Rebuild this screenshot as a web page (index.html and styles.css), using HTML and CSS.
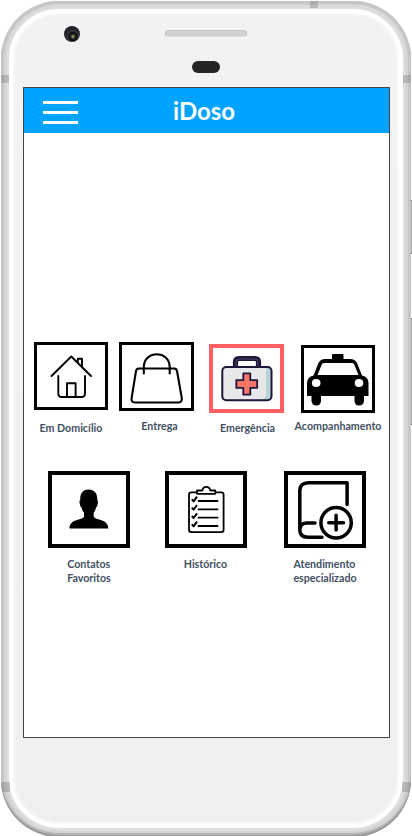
FILE: index.html
```html
<!DOCTYPE html>
<html lang="pt">
<head>
<meta charset="utf-8">
<title>iDoso</title>
<link rel="stylesheet" href="styles.css">
</head>
<body>
<i class="key power"></i><i class="key volume"></i>
<div class="phone">
  <div class="face">
    <i class="speaker"></i><i class="camera"></i><i class="sensor"></i>
    <main class="screen">
      <header class="bar">
        <div class="menu"><i></i><i></i><i></i></div>
        <h1>iDoso</h1>
      </header>
      <section class="row services">
        <div class="item home">
          <svg class="icon" viewBox="0 0 74 68"><g fill="none" stroke="#000" stroke-width="1.9" stroke-linecap="round" stroke-linejoin="round"><path d="M17.5 34 37.3 14.5 57 34M43.8 20.8V16.8H48V25M24.3 34V51.5Q24.3 55 27.8 55H47.5Q51 55 51 51.5V34M33 55V41.2H41.6V55"/></g></svg>
          <span>Em Domicílio</span>
        </div>
        <div class="item bag">
          <svg class="icon" viewBox="0 0 75 69"><g fill="none" stroke="#000" stroke-width="2.1" stroke-linecap="round" stroke-linejoin="round"><path d="M20 26.5H55Q57.6 26.5 58 29L62.7 55.5Q63.4 60.5 59.5 60.5H15.8Q11.8 60.5 12.7 55.5L17 29Q17.4 26.5 20 26.5ZM24.8 31.5V25C24.8 8 50.7 8 50.7 25V31.5"/></g></svg>
          <span>Entrega</span>
        </div>
        <div class="item emergency">
          <svg class="icon" viewBox="0 0 75 69"><path d="M26.5 23V18Q26.5 14.5 30 14.5H46Q49.5 14.5 49.5 18V23" fill="none" stroke="#20153a" stroke-width="5.2"/><path d="M27 22V18Q27 15 30 15H46Q49 15 49 18V22" fill="none" stroke="#51466b" stroke-width="1"/><rect x="13.3" y="23" width="49.2" height="33.3" rx="4" fill="#e8e8ea"/><path d="M57 24H59Q62 24 62 27V52Q62 56 58 56H53Q57 54 57 50Z" fill="#b9d2d5"/><rect x="13.3" y="23" width="49.2" height="33.3" rx="4" fill="none" stroke="#20153a" stroke-width="2"/><path d="M34.3 29.3H41.3V36.2H48.2V43.8H41.3V50.7H34.3V43.8H27.3V36.2H34.3Z" fill="#f77668" stroke="#20153a" stroke-width="1.8" stroke-linejoin="round"/></svg>
          <span>Emergência</span>
        </div>
        <div class="item taxi">
          <svg class="icon" viewBox="0 0 74 68"><path fill-rule="evenodd" d="M31 10Q31 9 32 9H41.5Q42.5 9 42.5 10V14H49Q54 14 56 18L61 30.5Q67.5 32 67.5 38V51H63V56Q62.5 60.5 58 60.5Q54 60.5 53.5 56V51H20V56Q19.5 60.5 15.5 60.5Q11 60.5 10.5 56V51H6V38Q6 32 12.5 30.5L17.5 18Q19.5 14 24 14H31ZM21 19 16.5 30H57.5L53 19Q52.4 18 50.5 18H23.5Q21.5 18 21 19Z"/><g fill="#fff"><ellipse cx="15.2" cy="38" rx="4.3" ry="3.9"/><ellipse cx="58" cy="38" rx="4.3" ry="3.9"/></g></svg>
          <span>Acompanhamento</span>
        </div>
      </section>
      <section class="row more">
        <div class="item contacts">
          <svg class="icon" viewBox="0 0 82 77"><path d="M40.7 18.5C46.5 18.5 49.7 22.5 49.2 29Q50.5 29.5 49.7 33Q49.3 36 48.1 36.5Q47.4 39.7 45.7 41.5V45.5C47 49.5 60.3 47.5 60.3 57.5H21.5C21.5 47.5 34.8 49.5 36 45.5V41.5Q34 39.7 33.5 36.5Q32 36 31.8 33Q31 29.5 32.3 29C31.7 22.5 35 18.5 40.7 18.5Z"/></svg>
          <span>Contatos<br>Favoritos</span>
        </div>
        <div class="item history">
          <svg class="icon" viewBox="0 0 82 77"><g fill="none" stroke="#000" stroke-width="1.8" stroke-linecap="round" stroke-linejoin="round"><path d="M31.5 21.3H26.3Q24 21.3 24 23.6V58.8Q24 61.1 26.3 61.1H56.3Q58.6 61.1 58.6 58.8V23.6Q58.6 21.3 56.3 21.3H51M32 22.8V19.5H36.8Q37.8 19.5 37.8 18Q38.3 15.8 41.2 15.8Q44.2 15.8 44.8 18Q44.8 19.5 46 19.5H50.3V22.8ZM33.5 30H52.6M33.5 38.3H52.6M33.5 46.7H52.6M33.5 55H52.6"/><path stroke-width="2" stroke-linecap="butt" d="M26.8 28.3 28.6 30.3 32 25.7M26.8 36.6 28.6 38.6 32 34M26.8 45 28.6 47 32 42.4M26.8 53.3 28.6 55.3 32 50.7"/></g></svg>
          <span>Histórico</span>
        </div>
        <div class="item care">
          <svg class="icon" viewBox="0 0 82 77"><g fill="none" stroke="#000" stroke-width="3.5" stroke-linecap="round" stroke-linejoin="round"><path d="M63.1 33.5V11.8H24.5Q15.8 11.8 15.8 20V59Q15.8 66.2 24 66.2H38M15.8 59Q16 52 23 52H31"/><circle cx="52.1" cy="51.7" r="15.2"/><path d="M44.7 51.7H59.5M52.1 44.3V59.1"/></g></svg>
          <span>Atendimento<br>especializado</span>
        </div>
      </section>
    </main>
  </div>
  <i class="band top"></i><i class="band left"></i><i class="band right"></i><i class="band left low"></i><i class="band right low"></i>
</div>
</body>
</html>
```
FILE: styles.css
```css
* { box-sizing: border-box; }
body { margin: 0; height: 836px; padding: 1px 1px 0 1px; background: #fff; overflow: hidden; position: relative; font-family: Lato, sans-serif; }
.phone { position: relative; height: 836px; padding: 8px; border-radius: 58px; background: #dedede; overflow: hidden;
  box-shadow: inset 0 -2px 0 0 #999, inset 0 -4px 0 0 #b4b4b4, inset 0 0 0 3px #c6c6c6, inset 0 -1px 0 5px #d3d3d3, inset 0 0 0 6px #dadada; }
.face { height: 819px; border: 4px solid #fff; border-radius: 50px; background: linear-gradient(#f3f2f3, #efefef); box-shadow: inset 0 0 3px 1px #fff; display: flex; flex-direction: column; align-items: center; padding-top: 17px; position: relative; }
.speaker { width: 82px; height: 7px; flex: none; border-radius: 4px; background: #d1d1d1; border: 1px solid #c4c4c4; border-bottom-color: #dedede; }
.sensor { width: 28px; height: 12px; flex: none; margin-top: 24px; border-radius: 6px; background: #252525; }
.camera { position: absolute; left: 51px; top: 13px; width: 16px; height: 16px; border-radius: 50%; background: radial-gradient(circle at 56% 66%, #9a9b3c 0 .5px, #33333b 2px, #0b0b0e 4px, #3b3d42 5.5px, #222326 7px); }
.screen { width: 367px; height: 651px; flex: none; margin: 14px 0 0 1px; border: 1px solid #444; background: #fff; }
.bar { height: 45px; background: #00a3ff; display: flex; align-items: center; }
.menu { display: flex; flex-direction: column; gap: 7px; width: 35px; margin: 4px 0 0 19px; }
.menu i { height: 3px; background: #fff; }
h1 { margin: 1px 0 0 95px; font-size: 24px; line-height: 30px; color: #fff; font-weight: 700; }
.row { display: flex; align-items: flex-start; }
.services { margin: 209px 0 0 10px; height: 129px; }
.more { margin-left: 24px; }
.item { flex: none; display: flex; flex-direction: column; align-items: center; width: 75px; }
.icon { display: block; width: 75px; height: 69px; outline: 3px solid #000; outline-offset: -3px; }
.item span { display: block; white-space: nowrap; font-size: 10.67px; line-height: 13.5px; font-weight: 700; color: #425063; margin-top: 9px; }
.home { width: 74px; }
.home .icon { width: 74px; height: 68px; }
.home span { margin-top: 11px; }
.bag { margin-left: 11px; }
.bag span { margin: 8px 0 0 6px; }
.emergency { margin: 2px 0 0 15px; }
.emergency .icon { outline: 4px solid #ff6163; outline-offset: -4px; }
.emergency span { margin-top: 8px; margin-left: 2px; }
.taxi { width: 74px; margin: 3px 0 0 17px; }
.taxi .icon { width: 74px; height: 68px; }
.taxi span { margin-top: 6px; }
.more .item { width: 82px; }
.more .icon { width: 82px; height: 77px; outline-width: 4px; outline-offset: -4px; }
.more .history span { margin-left: -1px; }
.history { margin-left: 35px; }
.care { margin-left: 37px; }
.band { position: absolute; background: rgba(110,110,110,.33); }
.top { left: 309px; top: 0; width: 8px; height: 7px; }
.left { left: 0; top: 74px; width: 8px; height: 8px; }
.right { right: 0; top: 74px; width: 8px; height: 8px; }
.low { top: 781px; width: 9px; height: 10px; }
.key { position: absolute; right: 0; width: 3px; background: #aaa; border-top: 1px solid #777; border-bottom: 1px solid #777; }
.power { top: 200px; height: 54px; }
.volume { top: 318px; height: 107px; }
```
